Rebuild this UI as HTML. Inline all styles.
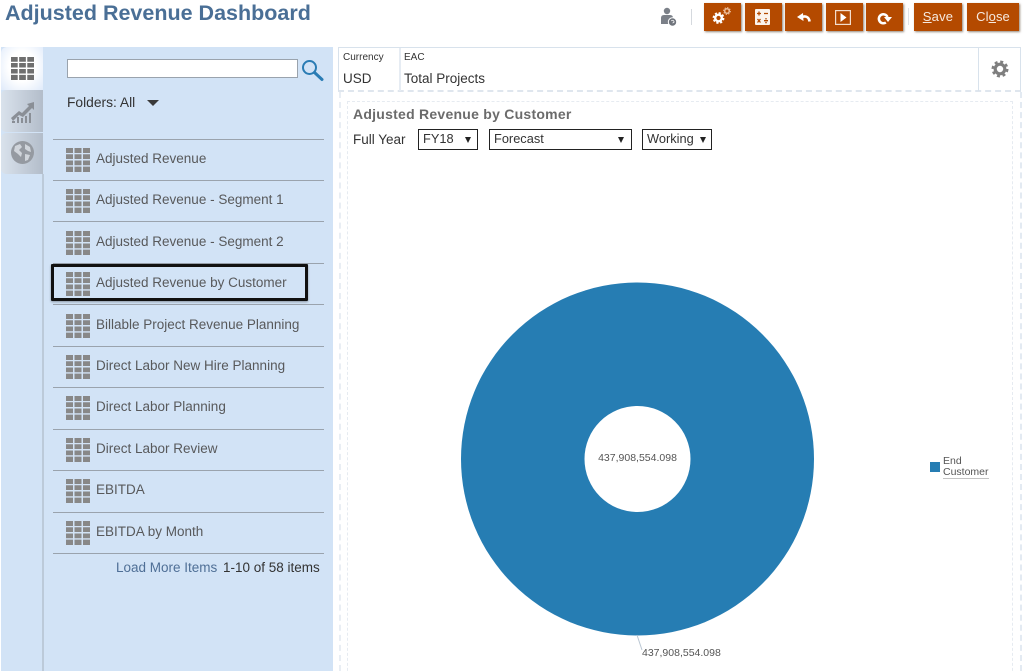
<!DOCTYPE html>
<html>
<head>
<meta charset="utf-8">
<style>
html,body{margin:0;padding:0;background:#fff;width:1024px;height:671px;overflow:hidden;}
#w{position:absolute;left:0;top:0;width:1024px;height:671px;overflow:hidden;font-family:"Liberation Sans",sans-serif;}
.a{position:absolute;white-space:nowrap;}
.btn{position:absolute;top:3px;height:28px;background:#b44a00;box-shadow:1px 1px 2px rgba(90,70,50,.65);color:#f6e9df;text-align:center;font-size:13px;line-height:28px;}
.btn svg{position:absolute;}
.line{position:absolute;left:53px;width:271px;height:1px;background:#9aa3ad;}
.item{position:absolute;left:96px;font-size:13.5px;line-height:16px;color:#58595b;white-space:nowrap;}
.grid{position:absolute;left:66px;width:24px;height:24px;fill:#888;}
.sel{position:absolute;background:#fff;border:1px solid #222;box-sizing:border-box;height:21px;top:129px;font-size:12.8px;line-height:18px;color:#333;padding-left:4px;}
.sel i{position:absolute;top:7px;width:0;height:0;border-left:3.5px solid transparent;border-right:3.5px solid transparent;border-top:6px solid #222;}
</style>
</head>
<body>
<div id="w">
<div class="a" style="left:5px;top:1px;font-size:21.5px;font-weight:bold;color:#4a6f96;line-height:25px;">Adjusted Revenue Dashboard</div>

<svg class="a" style="left:659px;top:6px" width="20" height="21" viewBox="0 0 20 21"><circle cx="8" cy="5" r="3.200" fill="#7b8088"/><path d="M2 18V12q0-3 3-3h6q3 0 3 3v6z" fill="#7b8088"/><circle cx="13.500" cy="16" r="4.200" fill="#6f747c" stroke="#fff"/><path d="M12.300 15q1.200-1.500 2.400 0t-1.200 2" fill="none" stroke="#fff" stroke-width=".8"/></svg>
<div class="a" style="left:691px;top:9px;width:1px;height:16px;background:#d5d9de"></div>

<div class="btn" style="left:704px;width:37px"><svg style="left:7px;top:3px" width="24" height="22" viewBox="0 0 24 22"><circle cx="7.500" cy="12" r="3.300" fill="none" stroke="#fff" stroke-width="2.400"/><circle cx="7.500" cy="12" r="5" fill="none" stroke="#fff" stroke-width="1.800" stroke-dasharray="2.200 1.730"/><circle cx="16" cy="5" r="2.300" fill="none" stroke="#edbf9c" stroke-width="1.500"/><circle cx="16" cy="5" r="3.400" fill="none" stroke="#edbf9c" stroke-width="1" stroke-dasharray="1.300 1.370"/></svg></div>
<div class="btn" style="left:745px;width:37px"><svg style="left:10px;top:6px" width="15" height="16" viewBox="0 0 15 16"><rect width="15" height="16" rx="1" fill="#fbf3ec"/><path d="M2 4.500h4M4 2.500v4M9 4.500h4M2.500 10l3 3.500M5.500 10l-3 3.500M9 11.700h4" stroke="#b44a00" stroke-width="1.300"/><circle cx="11" cy="9.800" r=".8" fill="#b44a00"/><circle cx="11" cy="13.600" r=".8" fill="#b44a00"/></svg></div>
<div class="btn" style="left:785px;width:37px"><svg style="left:12px;top:10px" width="14" height="10" viewBox="0 0 14 10"><path d="M4 4.500c3-2 8-1.500 8.500 4" fill="none" stroke="#fff" stroke-width="2.600"/><path d="M0 4l6-4 .5 8z" fill="#fff"/></svg></div>
<div class="btn" style="left:826px;width:37px"><svg style="left:9px;top:7px" width="16" height="15" viewBox="0 0 16 15"><rect x=".6" y=".6" width="14.800" height="13.800" fill="none" stroke="#f3ddcc" stroke-width="1.200"/><path d="M5.500 3l6 4.500-6 4.500z" fill="#fff"/></svg></div>
<div class="btn" style="left:866px;width:37px"><svg style="left:10px;top:9px" width="17" height="13" viewBox="0 0 17 13"><path d="M11.500 5a4.500 4.500 0 1 0-1.600 5.500" fill="none" stroke="#fff" stroke-width="2.500"/><path d="M8 5h8l-4 5z" fill="#fff"/></svg></div>
<div class="a" style="left:908px;top:8px;width:1px;height:17px;background:#dfe3e8"></div>
<div class="btn" style="left:914px;width:48px;letter-spacing:.2px"><u>S</u>ave</div>
<div class="btn" style="left:967px;width:52px;letter-spacing:.1px">Cl<u>o</u>se</div>

<!-- left panel -->
<div class="a" style="left:1px;top:47px;width:332px;height:624px;background:#d2e3f6"></div>
<div class="a" style="left:42px;top:174px;width:2px;height:497px;background:#bccad9"></div>
<div class="a" style="left:1px;top:47px;width:42px;height:43px;background:radial-gradient(ellipse at 50% 45%,#fff 45%,#dfeafa 100%);border-radius:6px 0 0 0"></div>
<div class="a" style="left:1px;top:90px;width:42px;height:42px;background:linear-gradient(90deg,#d9e2ec,#b3bdca);border-radius:5px 0 0 5px"></div>
<div class="a" style="left:1px;top:133px;width:42px;height:41px;background:linear-gradient(90deg,#d9e2ec,#b3bdca);border-radius:5px 0 0 5px"></div>

<svg width="0" height="0" style="position:absolute"><defs><g id="g"><path d="M0 0h7v5H0zM8.500 0h7v5h-7zM17 0h7v5h-7zM0 6.300h7v4.700H0zM8.500 6.300h7v4.700h-7zM17 6.300h7v4.700h-7zM0 12.500h7v4.700H0zM8.500 12.500h7v4.700h-7zM17 12.500h7v4.700h-7zM0 18.600h7V24H0zM8.500 18.600h7V24h-7zM17 18.600h7V24h-7z"/></g></defs></svg>

<svg class="a" style="left:11px;top:57px;fill:#6f6f6f" width="23" height="23" viewBox="0 0 24 24"><use href="#g"/></svg>
<svg class="a" style="left:11px;top:101px" width="24" height="22" viewBox="0 0 24 22" fill="#8a8f96"><path d="M0 17l8-7 3 2 7-7-2-2 7-2v8l-2-2-9 9-4-2-6 6z"/><path d="M6 16h2v6H6zM10 17h2v5h-2zM14 15h2v7h-2zM18 12h2v10h-2zM1 20h3v2H1z"/></svg>
<svg class="a" style="left:11px;top:141px" width="23" height="23" viewBox="0 0 23 23"><circle cx="11.500" cy="11.500" r="11.500" fill="#959aa1"/><path d="M4 5l5-2 2 3-3 3 3 3-1 4-3-3-4-3zM14 3l5 3 1 5-3-1-3-2zM14 13l5 1-2 5-3 1z" fill="#d0d5db"/></svg>

<div class="a" style="left:67px;top:59px;width:231px;height:19px;box-sizing:border-box;background:#fff;border:1px solid #9aa3ad"></div>
<svg class="a" style="left:301px;top:59px" width="23" height="23" viewBox="0 0 23 23"><circle cx="8.500" cy="8.500" r="6.500" fill="none" stroke="#2a7cb4" stroke-width="2"/><path d="M13.500 13.500l7.500 7" stroke="#2a7cb4" stroke-width="3" stroke-linecap="round"/></svg>
<div class="a" style="left:67px;top:95px;font-size:13.800px;line-height:16px;color:#333">Folders: All</div>
<div class="a" style="left:147px;top:100px;width:0;height:0;border-left:6px solid transparent;border-right:6px solid transparent;border-top:6px solid #3a3a3a"></div>

<div class="line" style="top:139px"></div>
<div class="line" style="top:180px"></div>
<div class="line" style="top:221px"></div>
<div class="line" style="top:263px"></div>
<div class="line" style="top:304px"></div>
<div class="line" style="top:346px"></div>
<div class="line" style="top:387px"></div>
<div class="line" style="top:429px"></div>
<div class="line" style="top:470px"></div>
<div class="line" style="top:512px"></div>
<div class="line" style="top:553px"></div>

<svg class="grid" style="top:148px"><use href="#g"/></svg><div class="item" style="top:151px">Adjusted Revenue</div>
<svg class="grid" style="top:189px"><use href="#g"/></svg><div class="item" style="top:192px">Adjusted Revenue - Segment 1</div>
<svg class="grid" style="top:231px"><use href="#g"/></svg><div class="item" style="top:234px">Adjusted Revenue - Segment 2</div>
<svg class="grid" style="top:272px"><use href="#g"/></svg><div class="item" style="top:275px">Adjusted Revenue by Customer</div>
<svg class="grid" style="top:314px"><use href="#g"/></svg><div class="item" style="top:317px">Billable Project Revenue Planning</div>
<svg class="grid" style="top:355px"><use href="#g"/></svg><div class="item" style="top:358px">Direct Labor New Hire Planning</div>
<svg class="grid" style="top:396px"><use href="#g"/></svg><div class="item" style="top:399px">Direct Labor Planning</div>
<svg class="grid" style="top:438px"><use href="#g"/></svg><div class="item" style="top:441px">Direct Labor Review</div>
<svg class="grid" style="top:479px"><use href="#g"/></svg><div class="item" style="top:482px">EBITDA</div>
<svg class="grid" style="top:521px"><use href="#g"/></svg><div class="item" style="top:524px">EBITDA by Month</div>

<div class="a" style="left:51px;top:264px;width:257px;height:37px;box-sizing:border-box;border:3px solid #111;border-radius:1px;box-shadow:0 1px 2px rgba(0,0,0,.35)"></div>

<div class="a" style="left:116px;top:560px;font-size:13.500px;line-height:16px;color:#4f6f96">Load More Items</div>
<div class="a" style="left:223px;top:560px;font-size:13.500px;line-height:16px;color:#333">1-10 of 58 items</div>

<!-- POV bar -->
<div class="a" style="left:338px;top:47px;width:683px;height:45px;box-sizing:border-box;border:1px solid #d8e2ec;border-bottom:2px dashed #dfe6ee"></div>
<div class="a" style="left:399px;top:48px;width:2px;height:43px;background:#e6ecf3"></div>
<div class="a" style="left:978px;top:48px;width:1px;height:43px;background:#d8e2ec"></div>
<div class="a" style="left:343px;top:52px;font-size:10px;line-height:12px;color:#333">Currency</div>
<div class="a" style="left:404px;top:52px;font-size:10px;line-height:12px;color:#333">EAC</div>
<div class="a" style="left:343px;top:71px;font-size:13.500px;line-height:16px;color:#333">USD</div>
<div class="a" style="left:404px;top:71px;font-size:13.500px;line-height:16px;color:#333">Total Projects</div>
<svg class="a" style="left:991px;top:60px" width="18" height="18" viewBox="0 0 18 18"><circle cx="9" cy="9" r="4.800" fill="none" stroke="#7f7f7f" stroke-width="3.200"/><circle cx="9" cy="9" r="7.300" fill="none" stroke="#7f7f7f" stroke-width="2.400" stroke-dasharray="3 2.730"/></svg>

<!-- content frames -->
<div class="a" style="left:339px;top:92px;width:1px;height:579px;border-left:2px dashed #e9eef4"></div>
<div class="a" style="left:1020px;top:92px;width:1px;height:579px;border-left:2px dashed #e3eaf2"></div>
<div class="a" style="left:347px;top:101px;width:666px;height:600px;box-sizing:border-box;border:1px dashed #e6ebf1"></div>
<div class="a" style="left:353px;top:106px;font-size:14px;font-weight:bold;line-height:17px;color:#6b6b6b;letter-spacing:.25px">Adjusted Revenue by Customer</div>
<div class="a" style="left:353px;top:132px;font-size:13.500px;line-height:16px;color:#333">Full Year</div>
<div class="sel" style="left:418px;width:60px">FY18<i style="left:46px"></i></div>
<div class="sel" style="left:489px;width:143px">Forecast<i style="left:128px"></i></div>
<div class="sel" style="left:642px;width:70px">Working<i style="left:57px"></i></div>

<svg class="a" style="left:440px;top:270px" width="400" height="401" viewBox="440 270 400 401">
<circle cx="637.500" cy="459" r="176.500" fill="#267db3"/>
<circle cx="637.500" cy="459" r="53" fill="#fff"/>
<path d="M637 635l5 15" stroke="#b9c6d3" stroke-width="1"/>
</svg>
<div class="a" style="left:570px;top:452px;width:135px;text-align:center;font-size:10.500px;line-height:13px;color:#555">437,908,554.098</div>
<div class="a" style="left:642px;top:647px;font-size:10.500px;line-height:13px;color:#555">437,908,554.098</div>

<div class="a" style="left:930px;top:462px;width:10px;height:10px;background:#267db3"></div>
<div class="a" style="left:943px;top:456px;font-size:10.500px;line-height:11px;color:#555;white-space:normal;width:50px">End<br><span style="border-bottom:1px solid #c3c3c3">Customer</span></div>
</div>
</body>
</html>
